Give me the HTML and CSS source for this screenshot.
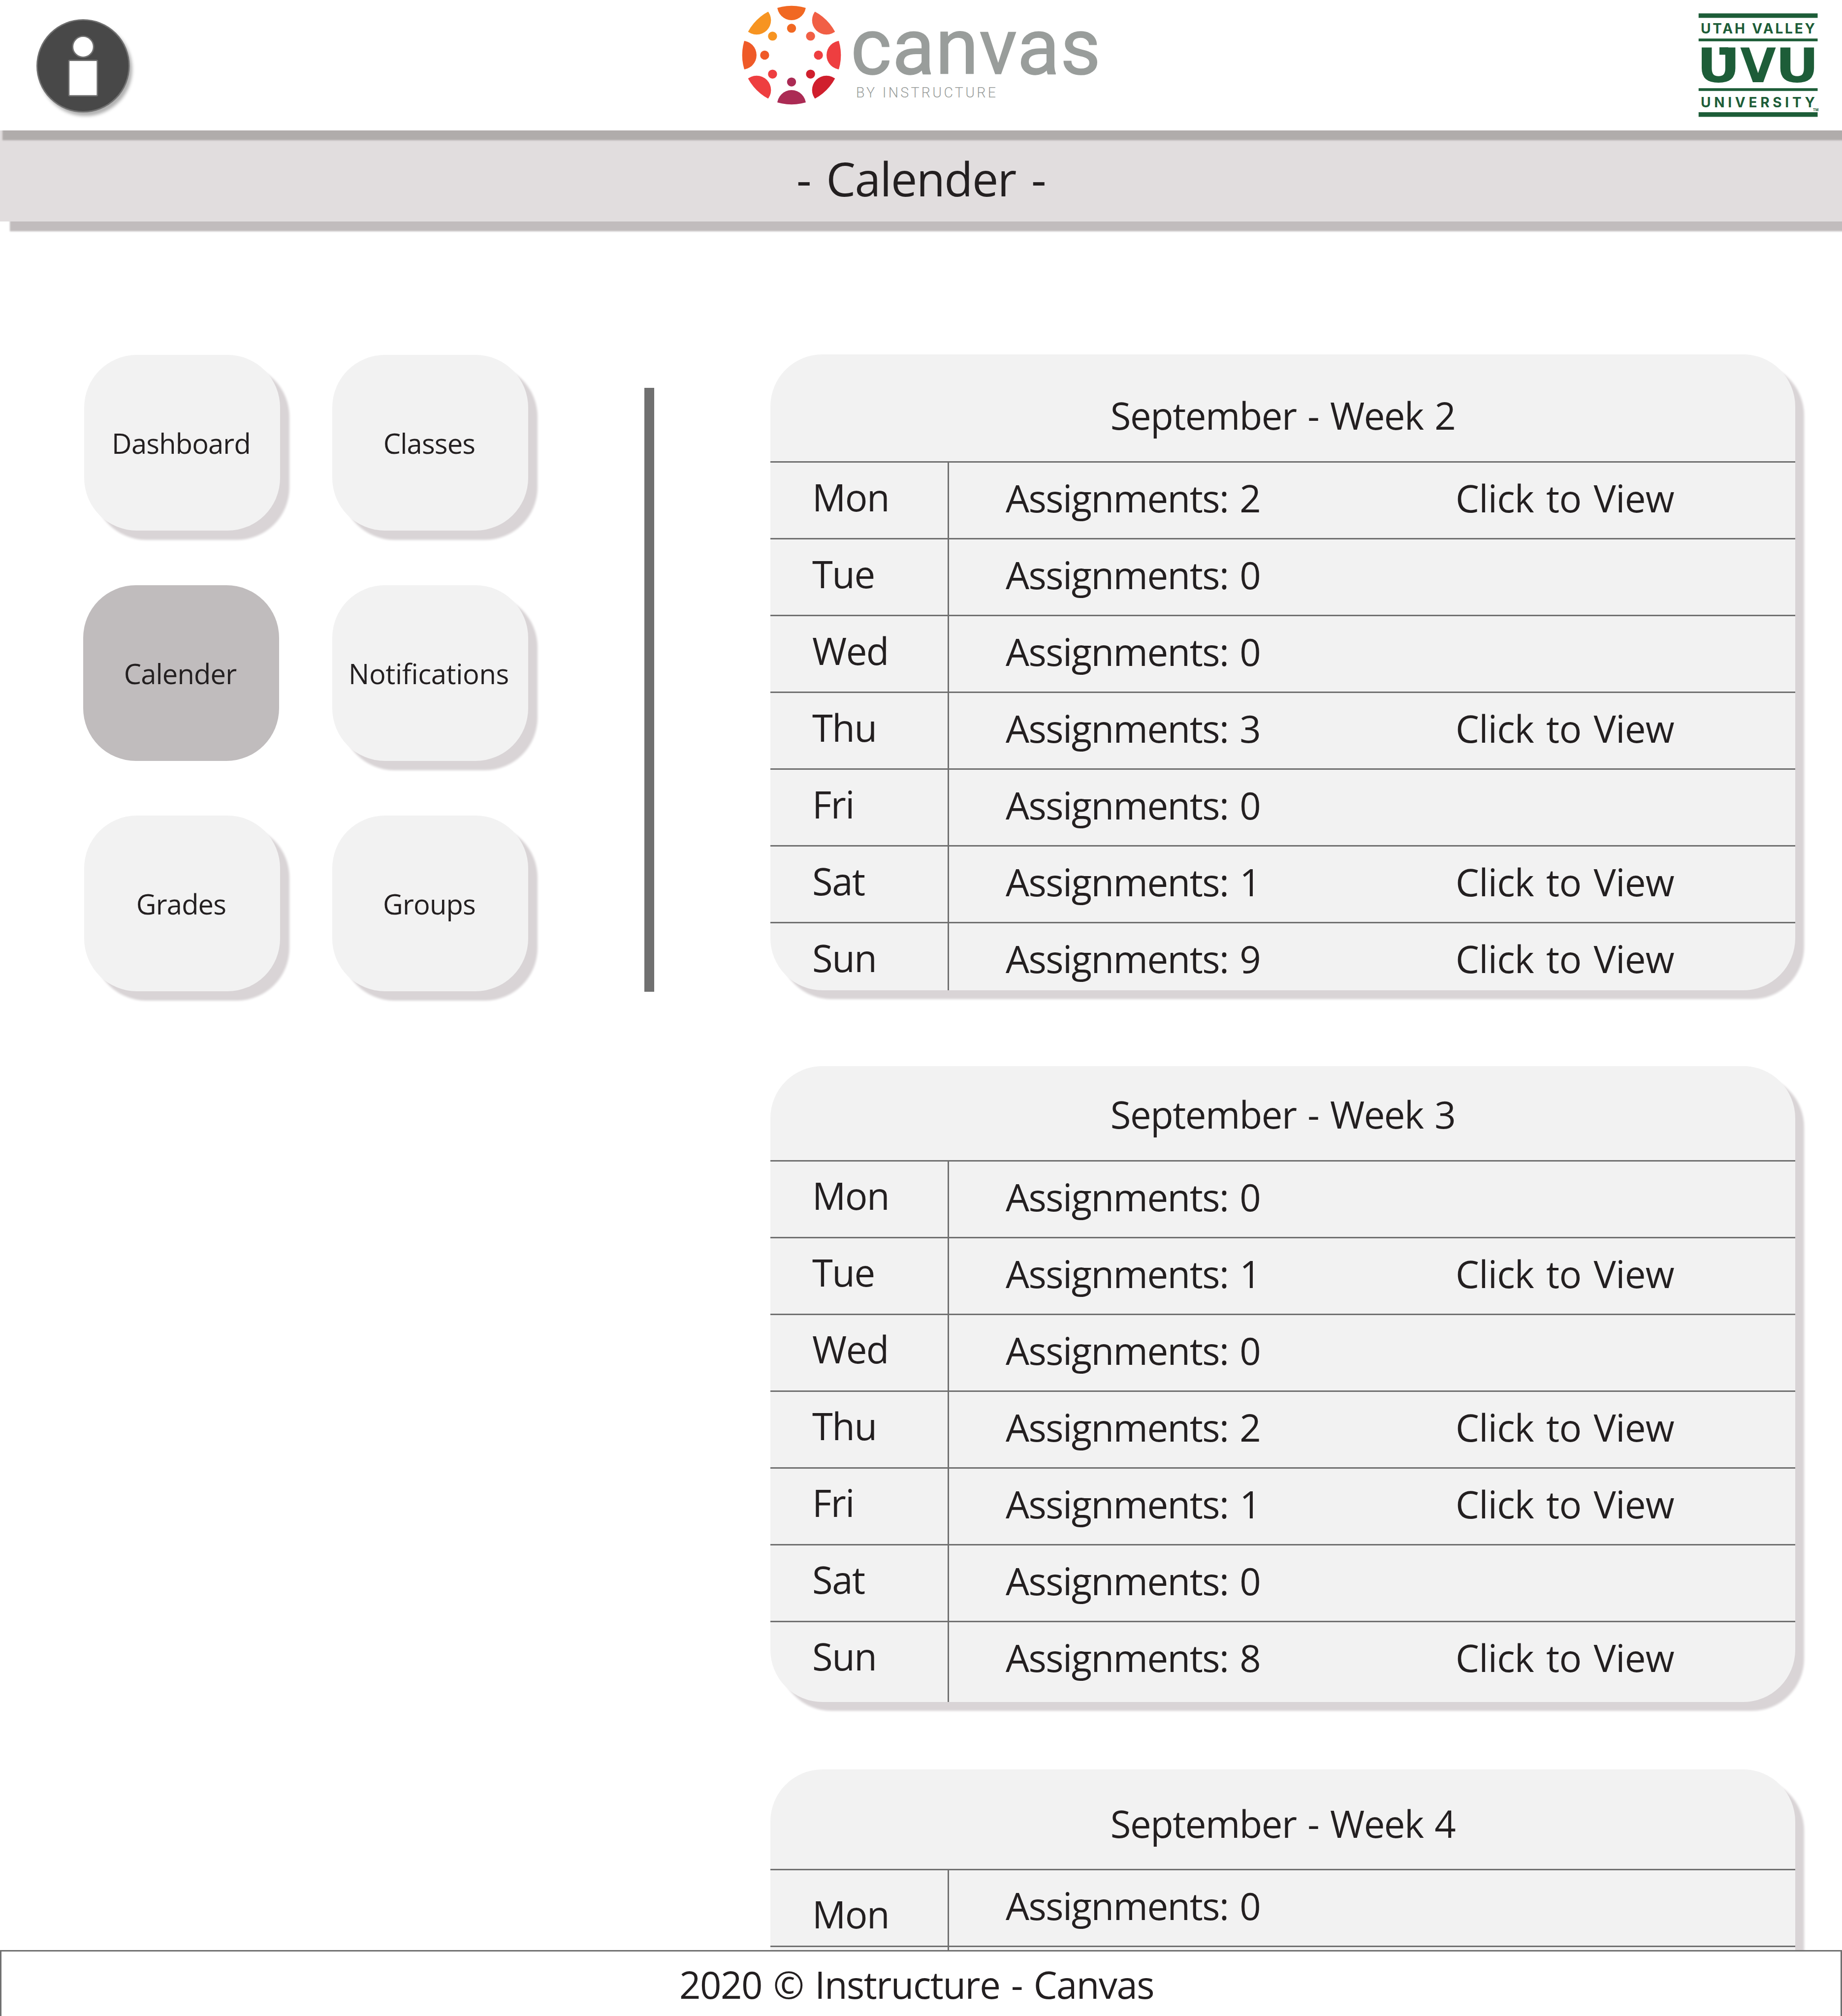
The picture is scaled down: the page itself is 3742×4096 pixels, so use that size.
FILE: index.html
```html
<!DOCTYPE html>
<html lang="en">
<head>
<meta charset="utf-8">
<title>Calender</title>
<link rel="stylesheet" href="styles.css">
</head>
<body>
<div class="page">
  <header class="header">
    <svg class="info" width="210" height="210" viewBox="0 0 210 210" role="img" aria-label="Info">
      <circle class="info-disc" cx="94.8" cy="94.8" r="93.4"/>
      <circle class="info-mark" cx="94.9" cy="56" r="21.3"/>
      <rect class="info-mark" x="65.8" y="83.6" width="58" height="72" rx="2"/>
    </svg>
    <svg class="canvas-logo" width="740" height="220" viewBox="0 0 740 220">
      <defs><clipPath id="ring"><circle cx="101" cy="101" r="100.3"/></clipPath></defs>
      <g clip-path="url(#ring)">
        <circle cx="101" cy="0.7" r="29.2" fill="#f16822"/>
        <circle cx="171.9" cy="30.1" r="29.2" fill="#f15f45"/>
        <circle cx="201.3" cy="101" r="29.2" fill="#ee3e40"/>
        <circle cx="171.9" cy="171.9" r="29.2" fill="#d01f2d"/>
        <circle cx="101" cy="201.3" r="29.2" fill="#ab2b54"/>
        <circle cx="30.1" cy="171.9" r="29.2" fill="#ee3e40"/>
        <circle cx="0.7" cy="101" r="29.2" fill="#ef5a28"/>
        <circle cx="30.1" cy="30.1" r="29.2" fill="#f79421"/>
      </g>
      <circle cx="101" cy="46.4" r="9.2" fill="#f16822"/>
      <circle cx="139.6" cy="62.4" r="9.2" fill="#f15f45"/>
      <circle cx="155.6" cy="101" r="9.2" fill="#ee3e40"/>
      <circle cx="139.6" cy="139.6" r="9.2" fill="#d01f2d"/>
      <circle cx="101" cy="155.6" r="9.2" fill="#ab2b54"/>
      <circle cx="62.4" cy="139.6" r="9.2" fill="#ee3e40"/>
      <circle cx="46.4" cy="101" r="9.2" fill="#ef5a28"/>
      <circle cx="62.4" cy="62.4" r="9.2" fill="#f79421"/>
      <text class="word" x="221" y="139" textLength="508">canvas</text>
      <text class="byline" x="232" y="186.6" textLength="284">BY INSTRUCTURE</text>
    </svg>
    <svg class="uvu" width="248" height="214" viewBox="0 0 248 214">
      <rect x="0.7" y="1.2" width="241.8" height="9.1"/>
      <rect x="0.7" y="52.3" width="241.8" height="5.6"/>
      <rect x="0.7" y="153.2" width="241.8" height="5.6"/>
      <rect x="0.7" y="202" width="241.8" height="9.4"/>
      <text class="uvu-small" x="5" y="41.6" textLength="232">UTAH VALLEY</text>
      <text class="uvu-big" x="-3" y="140.5" textLength="88.4" lengthAdjust="spacingAndGlyphs">U</text>
      <rect x="43" y="70.1" width="18" height="15.1"/>
      <text class="uvu-big" x="85" y="140.5" textLength="73" lengthAdjust="spacingAndGlyphs">V</text>
      <text class="uvu-big" x="156.8" y="140.5" textLength="88.4" lengthAdjust="spacingAndGlyphs">U</text>
      <text class="uvu-small" x="5" y="191.7" textLength="232">UNIVERSITY</text>
      <text class="uvu-tm" x="233" y="200">TM</text>
    </svg>
  </header>
  <div class="titlebar"><h1>- Calender -</h1></div>
  <main class="main">
    <nav class="nav">
      <a class="tile">Dashboard</a><a class="tile">Classes</a>
      <a class="tile active">Calender</a><a class="tile wide">Notifications</a>
      <a class="tile">Grades</a><a class="tile">Groups</a>
    </nav>
    <div class="divider"></div>
    <div class="weeks">
      <section class="week week-2">
        <h2>September - Week 2</h2>
        <div class="row"><span class="day">Mon</span><span class="count">Assignments: 2</span><a class="view">Click to View</a></div>
        <div class="row"><span class="day">Tue</span><span class="count">Assignments: 0</span></div>
        <div class="row"><span class="day">Wed</span><span class="count">Assignments: 0</span></div>
        <div class="row"><span class="day">Thu</span><span class="count">Assignments: 3</span><a class="view">Click to View</a></div>
        <div class="row"><span class="day">Fri</span><span class="count">Assignments: 0</span></div>
        <div class="row"><span class="day">Sat</span><span class="count">Assignments: 1</span><a class="view">Click to View</a></div>
        <div class="row"><span class="day">Sun</span><span class="count">Assignments: 9</span><a class="view">Click to View</a></div>
      </section>
      <section class="week week-3">
        <h2>September - Week 3</h2>
        <div class="row"><span class="day">Mon</span><span class="count">Assignments: 0</span></div>
        <div class="row"><span class="day">Tue</span><span class="count">Assignments: 1</span><a class="view">Click to View</a></div>
        <div class="row"><span class="day">Wed</span><span class="count">Assignments: 0</span></div>
        <div class="row"><span class="day">Thu</span><span class="count">Assignments: 2</span><a class="view">Click to View</a></div>
        <div class="row"><span class="day">Fri</span><span class="count">Assignments: 1</span><a class="view">Click to View</a></div>
        <div class="row"><span class="day">Sat</span><span class="count">Assignments: 0</span></div>
        <div class="row"><span class="day">Sun</span><span class="count">Assignments: 8</span><a class="view">Click to View</a></div>
      </section>
      <section class="week week-4">
        <h2>September - Week 4</h2>
        <div class="row"><span class="day">Mon</span><span class="count">Assignments: 0</span></div>
        <div class="row"><span class="day"></span></div>
      </section>
    </div>
  </main>
  <footer class="footer">2020 © Instructure - Canvas</footer>
</div>
</body>
</html>
```
FILE: styles.css
```css
* { box-sizing: border-box; }
body { margin: 0; background: #fff; }
.page {
  width: 3742px;
  height: 4096px;
  display: flex;
  flex-direction: column;
  overflow: hidden;
  background: #fff;
  color: #231f20;
  font-family: "Open Sans", "Noto Sans", sans-serif;
  font-size: 76px;
  line-height: 104px;
  letter-spacing: -1.5px;
  word-spacing: 4.5px;
  white-space: nowrap;
}
h1, h2 { margin: 0; font-weight: 400; font-size: inherit; }

.header {
  flex: none;
  height: 265px;
  display: flex;
  align-items: flex-start;
  background: #fff;
  box-shadow: 5px 20px 3px #b0acab;
  z-index: 2;
}
.header svg { flex: none; overflow: visible; letter-spacing: 0; word-spacing: 0; }
.info { margin: 38.5px 0 0 74px; }
.info-disc {
  fill: #484848;
  stroke: #707070;
  stroke-width: 2.8px;
  filter: drop-shadow(5px 7px 3px rgba(0, 0, 0, 0.3));
}
.info-mark { fill: #fff; stroke: #707070; stroke-width: 2.8px; }
.canvas-logo { margin: 10.5px 0 0 1222.5px; }
.word { font: 400 159px Roboto, sans-serif; fill: #999d9b; stroke: #999d9b; stroke-width: 1.6px; }
.byline { font: 300 28.6px Roboto, sans-serif; fill: #999d9b; }
.uvu { margin: 26px 0 0 1203px; fill: #1d5d38; }
.uvu-small { font: 700 28px Inter, sans-serif; }
.uvu-big { font: 700 97px "DejaVu Sans", sans-serif; }
.uvu-tm { font: 700 7px Inter, sans-serif; }

.titlebar {
  flex: none;
  height: 185px;
  padding-top: 32px;
  background: #e1ddde;
  box-shadow: 20px 20px 3px #c1bcbd;
  text-align: center;
  z-index: 1;
}
.titlebar h1 { font-size: 95px; line-height: 130px; letter-spacing: -1.6px; word-spacing: 8px; }

.main { flex: 1; min-height: 0; display: flex; align-items: flex-start; overflow: hidden; }
.nav {
  margin: 271px 0 0 171px;
  display: grid;
  grid-template-columns: 398px 398px;
  grid-auto-rows: 357px;
  gap: 111px 106px;
}
.tile {
  display: flex;
  align-items: center;
  justify-content: center;
  padding-right: 4px;
  border-radius: 107px;
  background: #f2f2f2;
  box-shadow: 19px 19px 4px #d9d4d6;
  font-size: 56px;
  letter-spacing: -0.8px;
}
.tile.wide { letter-spacing: -0.3px; padding-right: 6px; }
.tile.active { background: #c0bcbd; box-shadow: none; margin-left: -2px; margin-right: 2px; }
.divider { width: 20px; height: 1227px; margin: 338px 0 0 235.5px; background: #707070; }

.weeks { margin: 270px 0 0 236.5px; width: 2082px; }
.week {
  overflow: hidden;
  border-radius: 106px;
  background: #f2f2f2;
  box-shadow: 18px 18px 4px #d9d4d6;
  display: flex;
  flex-direction: column;
}
.week h2 { flex: none; text-align: center; height: 217px; padding-top: 72px; }
.week-2 { height: 1292px; }
.week-3 { height: 1292px; margin-top: 154px; }
.week-3 h2 { height: 191px; padding-top: 46px; }
.week-4 { height: 560px; margin-top: 137px; }
.week-4 h2 { height: 202px; padding-top: 58px; }
.row {
  flex: none;
  height: 156px;
  display: grid;
  grid-template-columns: 363px 915px 1fr;
  border-top: 3px solid #707070;
  line-height: 143px;
}
.row:last-child { flex: 1; }
.day { padding-left: 85px; border-right: 3px solid #707070; line-height: 140px; }
.count { padding-left: 115px; }
.view { padding-left: 114px; letter-spacing: -0.7px; word-spacing: 6px; }
.week-3 .day { line-height: 137px; }
.week-4 .day { line-height: 178px; }

.footer {
  flex: none;
  height: 134px;
  padding: 15px 18px 0 0;
  border: 3px solid #707070;
  border-bottom: 0;
  background: #fff;
  text-align: center;
}
```
